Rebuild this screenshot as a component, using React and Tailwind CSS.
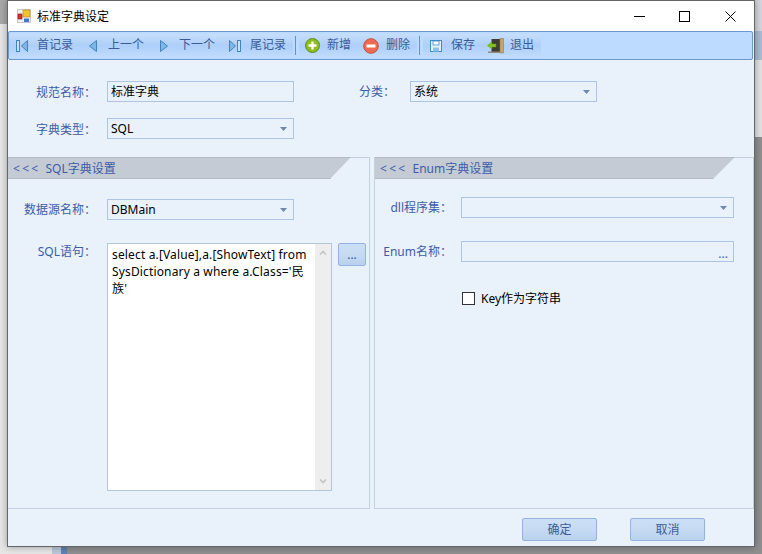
function IconFirst() {
  return (
    <svg width="14" height="14" viewBox="0 0 14 14">
      <rect x="1.5" y="1.5" width="3" height="11" fill="#c9e0f5" stroke="#3f86c0" />
      <path d="M12.5 1.5 V12.5 L6.5 7 Z" fill="#7fb6e4" stroke="#3f86c0" />
    </svg>
  );
}

function IconPrev() {
  return (
    <svg width="10" height="14" viewBox="0 0 10 14">
      <path d="M8.5 1.5 V12.5 L1.5 7 Z" fill="#7fb6e4" stroke="#3f86c0" />
    </svg>
  );
}

function IconNext() {
  return (
    <svg width="10" height="14" viewBox="0 0 10 14">
      <path d="M1.5 1.5 V12.5 L8.5 7 Z" fill="#7fb6e4" stroke="#3f86c0" />
    </svg>
  );
}

function IconLast() {
  return (
    <svg width="14" height="14" viewBox="0 0 14 14">
      <path d="M1.5 1.5 V12.5 L7.5 7 Z" fill="#7fb6e4" stroke="#3f86c0" />
      <rect x="9.5" y="1.5" width="3" height="11" fill="#c9e0f5" stroke="#3f86c0" />
    </svg>
  );
}

function IconAdd() {
  return (
    <svg width="15" height="15" viewBox="0 0 15 15">
      <circle cx="7.5" cy="7.5" r="7" fill="#8cbc1e" stroke="#5f8f16" />
      <path d="M7.5 3.5 V11.5 M3.5 7.5 H11.5" stroke="#fff" strokeWidth="2.4" />
    </svg>
  );
}

function IconRemove() {
  return (
    <svg width="16" height="16" viewBox="0 0 16 16">
      <circle cx="8" cy="8" r="7.3" fill="#ee6a55" stroke="#c9503e" />
      <rect x="3.5" y="6.5" width="9" height="3" fill="#fff" />
    </svg>
  );
}

function IconSave() {
  return (
    <svg width="12" height="12" viewBox="0 0 12 12">
      <rect x="0.5" y="0.5" width="11" height="11" fill="#e6f2fb" stroke="#3f8cc4" />
      <rect x="3" y="1" width="6" height="4" fill="#ffffff" stroke="#3f8cc4" strokeWidth="0.8" />
      <rect x="3" y="7.5" width="6" height="4" fill="#8fc0e8" />
    </svg>
  );
}

function IconExit() {
  return (
    <svg width="17" height="16" viewBox="0 0 17 16">
      <rect x="4.5" y="1" width="9" height="13" fill="#3c3c34" />
      <path d="M13 0.5 L16.5 0.5 V15 H13 Z" fill="#c9a468" stroke="#9a7a46" strokeWidth="0.6" />
      <rect x="1" y="13.5" width="12" height="1.5" fill="#8c8c80" />
      <path d="M0.5 7.5 L5 3.8 V6 H9 V9 H5 V11.2 Z" fill="#86c21e" stroke="#5f9a10" strokeWidth="0.5" />
    </svg>
  );
}

function AppIcon() {
  return (
    <svg width="14" height="14" viewBox="0 0 14 14" className="shrink-0">
      <rect width="14" height="14" fill="#c8c8c8" />
      <rect x="1" y="1" width="12" height="12" fill="#efefef" />
      <rect x="6" y="1" width="7" height="7" fill="#f2c230" stroke="#b58a14" strokeWidth="0.6" />
      <rect x="1" y="5" width="4" height="5" fill="#d8302a" stroke="#8a1a18" strokeWidth="0.6" />
      <rect x="7" y="9.5" width="5" height="3.5" fill="#3f78c8" />
    </svg>
  );
}

function Caret() {
  return (
    <svg width="7" height="4" viewBox="0 0 7 4" className="shrink-0">
      <path d="M0 0 H7 L3.5 4 Z" fill="#6d87ad" />
    </svg>
  );
}

function ToolItem({ icon, text }) {
  return (
    <div className="flex items-center">
      <span className="flex w-5 justify-center">{icon}</span>
      <span className="ml-[5px] pb-[2px] text-[#3b5b97]">{text}</span>
    </div>
  );
}

function ToolGroup({ children }) {
  return (
    <div className="flex h-[23px] items-center gap-[10px] bg-gradient-to-b from-[#c6defb] via-[#adcff9] to-[#c0dbfd] pl-[3px] pr-[7px]">
      {children}
    </div>
  );
}

function Select({ value, className }) {
  return (
    <div className={`flex h-[21px] items-center justify-between border border-[#aec4e3] pl-[3px] pr-[6px] text-black ${className}`}>
      <span>{value}</span>
      <Caret />
    </div>
  );
}

function PanelHeader({ title, clip }) {
  return (
    <div className={`-mt-px flex h-[22px] items-center gap-[5px] border-y border-[#b3bbc6] bg-[#c4cbd4] pl-[5px] text-[#3f5ca6] ${clip}`}>
      <span className="tracking-[2.3px]">&lt;&lt;&lt;</span>
      <span>{title}</span>
    </div>
  );
}

function DialogButton({ text }) {
  return (
    <div className="flex h-[23px] w-[75px] items-center justify-center rounded-[2px] border border-[#93b3de] bg-gradient-to-b from-[#cbdff6] via-[#c6daf2] to-[#b9d1ee] text-[#3b5b97]">
      {text}
    </div>
  );
}

export default function App() {
  return (
    <div
      className="flex h-[554px] w-[762px] flex-col overflow-hidden bg-[#8f8f8f] text-[12px] leading-[17px]"
      style={{ fontFamily: '"Noto Sans", "Noto Sans CJK SC", sans-serif' }}
    >
      <div className="flex h-[547px]">
        {/* what is behind the dialog */}
        <div className="flex w-[7px] flex-col">
          <div className="h-[24px] bg-[#a8a8a8]" />
          <div className="flex-1 bg-[#e6e6e6]" />
        </div>

        <div className="relative z-10 flex w-[748px] flex-col border border-[#666666] bg-[#e9f1fb] shadow-[0_0_7px_rgba(0,0,0,0.35)]">
          <div className="flex h-[30px] items-center bg-white pl-[9px] text-black">
            <AppIcon />
            <span className="ml-[6px] flex-1">标准字典设定</span>
            <svg width="11" height="1" viewBox="0 0 11 1" className="mr-[34px]">
              <rect width="11" height="1" fill="#000" />
            </svg>
            <svg width="11" height="11" viewBox="0 0 11 11" className="mr-[35px]">
              <rect x="0.5" y="0.5" width="10" height="10" fill="none" stroke="#000" />
            </svg>
            <svg width="11" height="11" viewBox="0 0 11 11" className="mr-[18px]">
              <path d="M0.5 0.5 L10.5 10.5 M10.5 0.5 L0.5 10.5" stroke="#000" />
            </svg>
          </div>

          <div className="mr-[1px] flex h-[29px] items-center rounded-[2px] border border-[#6d97d0] bg-[#bddbff]">
            <ToolGroup>
              <ToolItem icon={<IconFirst />} text="首记录" />
              <ToolItem icon={<IconPrev />} text="上一个" />
              <ToolItem icon={<IconNext />} text="下一个" />
              <ToolItem icon={<IconLast />} text="尾记录" />
            </ToolGroup>
            <div className="ml-[2px] mr-[3px] h-[19px] w-px bg-[#6d8fb9]" />
            <ToolGroup>
              <ToolItem icon={<IconAdd />} text="新增" />
              <ToolItem icon={<IconRemove />} text="删除" />
            </ToolGroup>
            <div className="ml-[2px] mr-[3px] h-[19px] w-px bg-[#6d8fb9]" />
            <ToolGroup>
              <ToolItem icon={<IconSave />} text="保存" />
              <ToolItem icon={<IconExit />} text="退出" />
            </ToolGroup>
          </div>

          <div className="flex h-[97px] flex-col pt-[21px] text-[#3f5ca6]">
            <div className="flex items-center">
              <div className="w-[88px] pt-[1px] text-right">规范名称：</div>
              <div className="ml-[11px] flex h-[21px] w-[187px] items-center border border-[#aec4e3] pl-[3px] text-black">
                标准字典
              </div>
              <div className="ml-[65px] w-[51px]">分类：</div>
              <Select value="系统" className="w-[187px]" />
            </div>
            <div className="mt-[16px] flex items-center">
              <div className="w-[88px] pt-[1px] text-right">字典类型：</div>
              <Select value="SQL" className="ml-[11px] w-[187px]" />
            </div>
          </div>

          <div className="flex h-[352px] gap-[4px] text-[#3f5ca6]">
            <div className="w-[362px] border-b border-r border-t border-[#c3d0e0]">
              <PanelHeader title="SQL字典设置" clip="[clip-path:polygon(0_0,343px_0,322px_100%,0_100%)]" />
              <div className="mt-[20px] flex items-center">
                <div className="w-[88px] text-right">数据源名称：</div>
                <Select value="DBMain" className="ml-[11px] w-[187px]" />
              </div>
              <div className="mt-[23px] flex items-start">
                <div className="w-[88px] text-right">SQL语句：</div>
                <div className="ml-[11px] flex h-[248px] w-[225px] border border-[#b4c6da] bg-white text-black">
                  <div className="flex-1 pl-[4px] pt-[2px] tracking-[0.15px]">
                    <div className="whitespace-nowrap">select a.[Value],a.[ShowText] from</div>
                    <div className="whitespace-nowrap">SysDictionary a where a.Class='民</div>
                    <div>族'</div>
                  </div>
                  <div className="flex w-[16px] flex-col items-center justify-between bg-[#eeeeee] py-[6px]">
                    <svg width="8" height="5" viewBox="0 0 8 5">
                      <path d="M1 4.5 L4 1.5 L7 4.5" fill="none" stroke="#c4c4c4" strokeWidth="1.6" />
                    </svg>
                    <svg width="8" height="5" viewBox="0 0 8 5">
                      <path d="M1 0.5 L4 3.5 L7 0.5" fill="none" stroke="#c4c4c4" strokeWidth="1.6" />
                    </svg>
                  </div>
                </div>
                <div className="ml-[6px] flex h-[23px] w-[28px] items-center justify-center rounded-[2px] border border-[#93b3de] bg-gradient-to-b from-[#cbdff6] via-[#c6daf2] to-[#b9d1ee] text-[#3b5b97]">
                  ...
                </div>
              </div>
            </div>

            <div className="w-[380px] border border-[#c3d0e0]">
              <PanelHeader title="Enum字典设置" clip="[clip-path:polygon(0_0,360px_0,338px_100%,0_100%)]" />
              <div className="mt-[18px] flex items-center">
                <div className="w-[77px] text-right">dll程序集：</div>
                <Select value="" className="ml-[9px] w-[273px]" />
              </div>
              <div className="mt-[23px] flex items-center">
                <div className="w-[77px] text-right">Enum名称：</div>
                <div className="ml-[9px] flex h-[21px] w-[273px] items-end justify-end border border-[#aec4e3] pr-[5px] leading-[14px]">
                  ...
                </div>
              </div>
              <div className="ml-[87px] mt-[28px] flex items-center text-black">
                <div className="h-[13px] w-[13px] border border-[#333333] bg-white" />
                <span className="ml-[6px]">Key作为字符串</span>
              </div>
            </div>
          </div>

          <div className="flex flex-1 justify-end gap-[33px] pr-[49px] pt-[9px]">
            <DialogButton text="确定" />
            <DialogButton text="取消" />
          </div>
        </div>

        <div className="flex w-[7px] flex-col">
          <div className="h-[31px] bg-[#d4d6dc]" />
          <div className="h-[29px] bg-[#a9bcd6]" />
          <div className="h-[77px] bg-[#e2e2e2]" />
          <div className="flex-1 bg-[#8f8f8f]" />
        </div>
      </div>

      <div className="flex h-[7px]">
        <div className="w-[52px] bg-[#e6e6e6]" />
        <div className="w-[9px] bg-[#b9c8da]" />
        <div className="w-[6px] bg-[#5f83b4]" />
        <div className="flex-1 bg-[#8f8f8f]" />
      </div>
    </div>
  );
}
